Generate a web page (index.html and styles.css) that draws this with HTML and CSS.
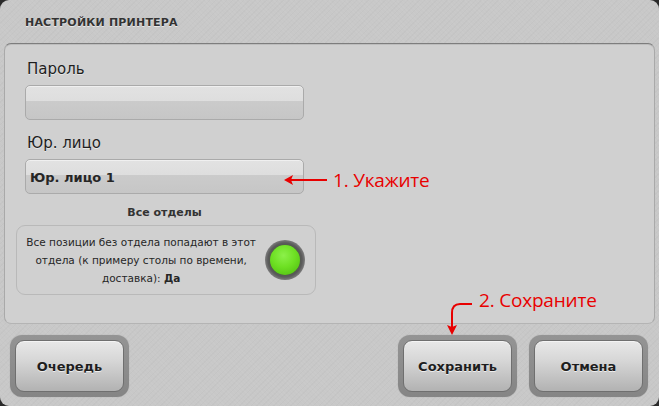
FILE: index.html
```html
<!DOCTYPE html>
<html lang="ru">
<head>
<meta charset="utf-8">
<link rel="stylesheet" href="styles.css">
</head>
<body>
<div class="window">
  <div class="title">НАСТРОЙКИ ПРИНТЕРА</div>
  <div class="panel">
    <div class="col">
      <div class="label">Пароль</div>
      <div class="input"></div>
      <div class="label label2">Юр. лицо</div>
      <div class="input"><span class="val">Юр. лицо 1</span></div>
      <div class="dept-title">Все отделы</div>
      <div class="dept-box">
        <div class="dept-text">Все позиции без отдела попадают в этот<br>отдела (к примеру столы по времени,<br>доставка): <b>Да</b></div>
        <div class="led"><div class="led-in"></div></div>
      </div>
    </div>
  </div>
  <div class="buttons">
    <div class="btn"><div class="btn-in">Очередь</div></div>
    <div class="spacer"></div>
    <div class="btn"><div class="btn-in">Сохранить</div></div>
    <div class="btn"><div class="btn-in">Отмена</div></div>
  </div>

  <div class="note note1">
    <svg width="44" height="12" viewBox="0 0 44 12"><path d="M2 6 H43" stroke="#e80000" stroke-width="2"/><path d="M0 6 L9 1 L7 6 L9 11 Z" fill="#e80000"/></svg>
    <span>1. Укажите</span>
  </div>
  <div class="note note2">
    <svg class="arr2" width="30" height="36" viewBox="0 0 30 36"><path d="M28 5 H16 C10 5 8 9 8 14 V28" stroke="#e80000" stroke-width="2" fill="none"/><path d="M8 36 L3 26 L8 28 L13 26 Z" fill="#e80000"/></svg>
    <span>2. Сохраните</span>
  </div>
</div>
</body>
</html>
```
FILE: styles.css
```css
html, body { margin: 0; padding: 0; }
body {
  width: 659px; height: 406px;
  background: #2a2a2a;
  font-family: "DejaVu Sans", Verdana, sans-serif;
  color: #222;
  overflow: hidden;
}
.window {
  position: relative;
  width: 659px; height: 406px;
  box-sizing: border-box;
  border-radius: 9px;
  background-color: #c8c8c8;
  background-image:
    repeating-linear-gradient(45deg, rgba(255,255,255,0.04) 0 1px, transparent 1px 3px),
    repeating-linear-gradient(-45deg, rgba(0,0,0,0.02) 0 1px, transparent 1px 4px);
  display: flex;
  flex-direction: column;
}
.title {
  height: 43px;
  box-sizing: border-box;
  padding: 16px 0 0 25px;
  font-size: 11px;
  font-weight: bold;
  color: #333;
  text-shadow: 0 1px 0 rgba(255,255,255,0.6);
  letter-spacing: 0.2px;
}
.panel {
  margin: 0 4px;
  height: 281px;
  box-sizing: border-box;
  background: #d0d0d0;
  border-radius: 7px;
  border-top: 1px solid #7d7d7d;
  border-left: 1px solid #a9a9a9;
  border-right: 1px solid #a9a9a9;
  border-bottom: 1px solid #b4b4b4;
  box-shadow: inset 0 1px 0 #bdbdbd;
  padding: 16px 0 0 20px;
}
.col { width: 280px; }
.label {
  font-size: 15px;
  line-height: 18px;
  height: 18px;
  color: #1e1e1e;
  padding-left: 2px;
  text-shadow: 0 1px 0 rgba(255,255,255,0.5);
}
.label2 { margin-top: 14px; }
.input {
  margin-top: 7px;
  height: 35px;
  width: 279px;
  box-sizing: border-box;
  border: 1px solid #aaa;
  border-radius: 5px;
  background: linear-gradient(to bottom, #e2e2e2 0%, #dedede 45%, #cbcbcb 46%, #c6c6c6 100%);
  box-shadow: inset 0 1px 0 #f0f0f0;
  display: flex;
  align-items: center;
  padding: 0 0 0 4px;
}
.val {
  font-size: 13px;
  font-weight: bold;
  color: #262626;
  margin-top: 1px;
}
.dept-title {
  margin-top: 11px;
  width: 279px;
  text-align: center;
  font-size: 11px;
  font-weight: bold;
  color: #333;
  line-height: 16px;
}
.dept-box {
  margin-top: 4px;
  margin-left: -9px;
  width: 300px;
  height: 70px;
  box-sizing: border-box;
  border: 1px solid #b9b9b9;
  border-radius: 9px;
  display: flex;
  align-items: center;
  padding: 0 10px 0 0;
}
.dept-text {
  width: 250px;
  text-align: center;
  font-size: 10.5px;
  line-height: 18px;
  color: #262626;
  margin-top: -1px;
}
.dept-text b { font-weight: bold; }
.led {
  margin-left: auto;
  width: 40px; height: 40px;
  border-radius: 50%;
  background: radial-gradient(circle at 50% 50%, #5a5a5a 60%, #8a8a8a 75%, #c8c8c8 100%);
  display: flex; align-items: center; justify-content: center;
}
.led-in {
  width: 30px; height: 30px;
  border-radius: 50%;
  background: radial-gradient(circle at 45% 35%, #8cf04a 0%, #6ee023 45%, #4cb80e 100%);
  box-shadow: 0 0 1px #2e6a06;
}
.buttons {
  display: flex;
  padding: 11px 11px 0 10px;
  gap: 12px;
}
.spacer { flex: 1; }
.btn {
  width: 119px; height: 62px;
  box-sizing: border-box;
  padding: 5px;
  border-radius: 12px;
  background: linear-gradient(to bottom, #949494, #858585);
  box-shadow: 0 0 1px #999;
}
.btn-in {
  height: 100%;
  box-sizing: border-box;
  border-radius: 9px;
  border: 1px solid #6f6f6f;
  background: linear-gradient(to bottom, #e8e8e8 0%, #d6d6d6 40%, #b2b2b2 100%);
  box-shadow: inset 0 1px 0 #f4f4f4;
  display: flex; align-items: center; justify-content: center;
  font-size: 13px;
  font-weight: bold;
  color: #1e1e1e;
  text-shadow: 0 1px 0 rgba(255,255,255,0.7);
}
.note {
  position: absolute;
  display: flex;
  align-items: center;
  color: #e80000;
  font-family: "Open Sans", "Noto Sans", sans-serif;
  font-size: 19px;
}
.note1 { left: 284px; top: 167px; gap: 5px; }
.note1 span { letter-spacing: -0.2px; }
.note2 { left: 444px; top: 287px; }
.note2 .arr2 { position: absolute; left: 0; top: 12px; }
.note2 span { margin-left: 35px; letter-spacing: -0.2px; }
```
